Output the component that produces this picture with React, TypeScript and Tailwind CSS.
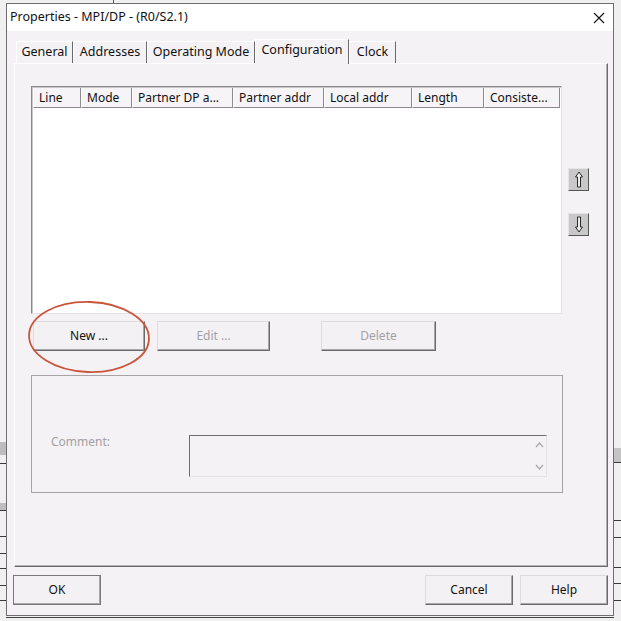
import React from "react";

const columns = [
  { label: "Line", w: "w-[48px]" },
  { label: "Mode", w: "w-[51px]" },
  { label: "Partner DP a...", w: "w-[101px]" },
  { label: "Partner addr", w: "w-[91px]" },
  { label: "Local addr", w: "w-[88px]" },
  { label: "Length", w: "w-[72px]" },
  { label: "Consiste...", w: "w-[76px]" },
];

const tabs = [
  { label: "General", w: "w-[57px]" },
  { label: "Addresses", w: "w-[74px]" },
  { label: "Operating Mode", w: "w-[108px]" },
  { label: "Configuration", w: "w-[94px]", active: true },
  { label: "Clock", w: "w-[47px]" },
];

type BtnProps = { label: string; w: string; disabled?: boolean; isDefault?: boolean };

const Btn = ({ label, w, disabled, isDefault }: BtnProps) => (
  <div
    className={`${w} h-[30px] flex items-center justify-center bg-[#f4f1f4] border ${
      isDefault ? "border-[#7a7a7a]" : "border-t-[#dedbde] border-l-[#dedbde] border-r-[#6a6a6a] border-b-[#6a6a6a]"
    } shadow-[inset_-1px_-1px_0_#a9a6a9] text-[12px] ${disabled ? "text-[#a3a0a3]" : "text-[#111]"}`}
  >
    {label}
  </div>
);

const ArrowBtn = ({ down }: { down?: boolean }) => (
  <div className="w-[21px] h-[23px] flex items-center justify-center bg-[#c9c8c9] border border-t-[#e4e4e4] border-l-[#e4e4e4] border-r-[#555] border-b-[#555]">
    <svg width="10" height="17" viewBox="0 0 10 17" className={down ? "rotate-180" : ""}>
      <path d="M5 1 L8.5 6 L6.5 6 L6.5 16 L3.5 16 L3.5 6 L1.5 6 Z" fill="#ececec" stroke="#2a2a2a" strokeWidth="1" />
    </svg>
  </div>
);

const GutterLine = () => <div className="h-[1px] bg-[#3a3a3a]" />;

export default function App() {
  return (
    <div className="w-[621px] h-[621px] flex overflow-hidden bg-[#f0f0f0] font-['Noto_Sans',sans-serif] text-[12px] text-[#111]">
      {/* left strip of the window behind */}
      <div className="w-[6px] flex flex-col">
        <div className="h-[442px]" />
        <div className="h-[13px] bg-[#bdbdbd]" />
        <div className="h-[8px]" />
        <GutterLine />
        <div className="h-[39px]" />
        <div className="h-[7px] bg-[#bdbdbd]" />
        <GutterLine />
        <div className="h-[25px]" />
        <GutterLine />
        <div className="h-[16px]" />
        <GutterLine />
        <div className="h-[14px]" />
        <GutterLine />
        <div className="h-[16px]" />
        <GutterLine />
        <div className="h-[14px]" />
        <GutterLine />
      </div>

      <div className="flex flex-col">
        <div className="h-[3px]">
          <div className="ml-[107px] w-[1px] h-full bg-[#555]" />
        </div>

        {/* dialog */}
        <div className="w-[608px] h-[613px] flex flex-col border border-[#6e6e6e] bg-[#f5f2f5]">
          <div className="h-[27px] flex items-center justify-between bg-white pl-[3px] pr-[8px]">
            <span className="text-[12.5px] text-[#111]">Properties - MPI/DP - (R0/S2.1)</span>
            <svg width="12" height="12" viewBox="0 0 12 12">
              <path d="M1 1 L11 11 M11 1 L1 11" stroke="#111" strokeWidth="1.1" />
            </svg>
          </div>

          {/* tabs */}
          <div className="flex items-end h-[25px] mt-[8px] -mb-[1px] ml-[9px] relative z-10">
            {tabs.map((t) =>
              t.active ? (
                <div
                  key={t.label}
                  className={`${t.w} h-[25px] pb-[3px] flex items-center justify-center bg-[#f5f2f5] border-t border-l border-r border-t-white border-l-white border-r-[#6a6a6a] text-[12.5px]`}
                >
                  {t.label}
                </div>
              ) : (
                <div
                  key={t.label}
                  className={`${t.w} h-[22px] mb-[1px] flex items-center justify-center bg-[#f5f2f5] border-t border-l border-r border-t-white border-l-white border-r-[#6a6a6a] text-[12.5px]`}
                >
                  {t.label}
                </div>
              )
            )}
          </div>

          {/* tab page */}
          <div className="ml-[7px] w-[594px] h-[504px] flex flex-col border border-t-white border-l-white border-r-[#6a6a6a] border-b-[#6a6a6a] shadow-[inset_-1px_-1px_0_#b4b1b4] pl-[16px] pt-[22px]">
            <div className="flex">
              {/* list view */}
              <div className="w-[531px] h-[228px] flex flex-col bg-white border border-t-[#8a8a8a] border-l-[#8a8a8a] border-r-[#e2e2e2] border-b-[#e2e2e2] shadow-[inset_1px_1px_0_#c8c8c8]">
                <div className="flex h-[21px] pl-[1px] pt-[1px]">
                  {columns.map((c) => (
                    <div
                      key={c.label}
                      className={`${c.w} h-[20px] flex items-center pl-[5px] bg-[#f6f4f6] border-l border-l-white border-r border-r-[#8a8a8a] border-b border-b-[#8a8a8a] whitespace-nowrap overflow-hidden`}
                    >
                      {c.label}
                    </div>
                  ))}
                </div>
              </div>

              <div className="ml-[6px] pt-[82px] flex flex-col gap-[22px]">
                <ArrowBtn />
                <ArrowBtn down />
              </div>
            </div>

            {/* buttons */}
            <div className="relative flex mt-[7px]">
              <div className="ml-[2px]">
                <Btn label="New ..." w="w-[112px]" />
              </div>
              <div className="ml-[12px]">
                <Btn label="Edit ..." w="w-[113px]" disabled />
              </div>
              <div className="ml-[51px]">
                <Btn label="Delete" w="w-[115px]" disabled />
              </div>
              <svg width="126" height="76" viewBox="0 0 126 76" className="absolute left-[-4px] top-[-22px]">
                <ellipse cx="62" cy="38" rx="60" ry="35" fill="none" stroke="#c9563c" strokeWidth="1.8" transform="rotate(2 62 38)" />
              </svg>
            </div>

            {/* comment group */}
            <div className="mt-[24px] w-[532px] h-[118px] flex items-start border border-[#a7a4a7]">
              <span className="ml-[19px] mt-[57px] w-[138px] text-[#a3a0a3]">Comment:</span>
              <div className="mt-[59px] w-[358px] h-[42px] flex justify-end border border-t-[#6d6d6d] border-l-[#6d6d6d] border-r-[#e4e2e4] border-b-[#e4e2e4]">
                <div className="w-[14px] flex flex-col items-center justify-between py-[6px]">
                  <svg width="9" height="6" viewBox="0 0 9 6">
                    <path d="M1 5 L4.5 1 L8 5" fill="none" stroke="#a9a6a9" strokeWidth="1.2" />
                  </svg>
                  <svg width="9" height="6" viewBox="0 0 9 6">
                    <path d="M1 1 L4.5 5 L8 1" fill="none" stroke="#a9a6a9" strokeWidth="1.2" />
                  </svg>
                </div>
              </div>
            </div>
          </div>

          {/* dialog buttons */}
          <div className="flex mt-[8px] pl-[6px]">
            <Btn label="OK" w="w-[88px]" isDefault />
            <div className="ml-auto flex gap-[7px] mr-[5px]">
              <Btn label="Cancel" w="w-[88px]" />
              <Btn label="Help" w="w-[88px]" />
            </div>
          </div>
        </div>

        <div className="mt-[1px] h-[1px] bg-[#444]" />
      </div>

      {/* right strip of the window behind */}
      <div className="flex-1 flex flex-col">
        <div className="h-[448px]" />
        <div className="h-[14px] bg-[#c4c4c4]" />
        <GutterLine />
        <div className="h-[57px]" />
        <GutterLine />
        <div className="h-[16px]" />
        <GutterLine />
        <div className="h-[29px]" />
        <GutterLine />
        <div className="h-[15px]" />
        <GutterLine />
        <div className="h-[16px]" />
        <GutterLine />
      </div>
    </div>
  );
}
